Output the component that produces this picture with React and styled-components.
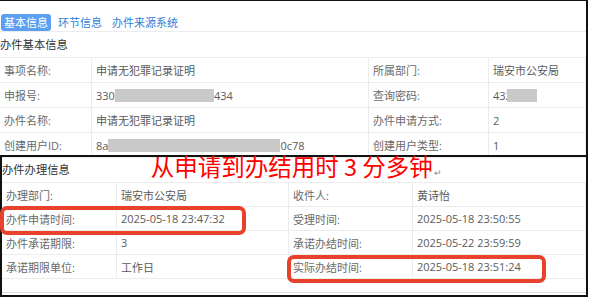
import styled, { createGlobalStyle } from "styled-components"

const GlobalStyle = createGlobalStyle`
  html, body {
    margin: 0;
    padding: 0;
    background: #fff;
  }
  body {
    font-family: "Open Sans", "Noto Sans CJK SC", sans-serif;
    font-size: 11px;
    color: #555;
  }
`

const basicRows = [
    ["事项名称:", "申请无犯罪记录证明", "所属部门:", "瑞安市公安局"],
    ["申报号:", "masked-sn", "查询密码:", "masked-pwd"],
    ["办件名称:", "申请无犯罪记录证明", "办件申请方式:", "2"],
    ["创建用户ID:", "masked-id", "创建用户类型:", "1"],
]

const handleRows = [
    ["办理部门:", "瑞安市公安局", "收件人:", "黄诗怡"],
    ["办件申请时间:", "2025-05-18 23:47:32", "受理时间:", "2025-05-18 23:50:55"],
    ["办件承诺期限:", "3", "承诺办结时间:", "2025-05-22 23:59:59"],
    ["承诺期限单位:", "工作日", "实际办结时间:", "2025-05-18 23:51:24"],
]

//Styled components
const Page = styled.div`
    width: 589px;
    height: 299px;
    display: flex;
    flex-direction: column;
`

const Shot = styled.section`
    box-sizing: border-box;
    width: 588px;
    height: ${props => props.h}px;
    display: flex;
    flex-direction: column;
    position: relative;
    border-top: ${props => props.top}px solid #111;
    border-right: 2px solid #111;
    border-left: ${props => props.boxed ? "2px solid #111" : "none"};
    border-bottom: ${props => props.boxed ? "2px solid #111" : "none"};
`

const TabBar = styled.div`
    display: flex;
    gap: 4px;
    padding: 13px 0 0 1px;
    border-bottom: 1px solid #ececec;
`

const Tab = styled.div`
    height: 17px;
    line-height: 17px;
    padding: 0 3px;
    font-size: 11px;
    border-radius: 3px;
    color: ${props => props.active ? "#fff" : "#2f7fd9"};
    background: ${props => props.active ? "#5b9ff2" : "transparent"};
`

const HeadRow = styled.div`
    height: 25px;
    display: flex;
    align-items: center;
`

const SectionTitle = styled.div`
    font-size: 11.3px;
    color: #333;
    line-height: 25px;
    white-space: nowrap;
`

const Note = styled.div`
    margin-left: 81px;
    font-size: 23.5px;
    line-height: 25px;
    color: #ff0000;
    white-space: nowrap;
    font-family: "Noto Sans CJK SC", "Open Sans", sans-serif;
`

const Pilcrow = styled.span`
    font-size: 9px;
    color: #888;
    margin-left: 1px;
`

const Table = styled.div`
    position: relative;
    display: flex;
    flex-direction: column;
    border-top: 1px solid #ececec;
`

const Row = styled.div`
    display: flex;
    height: ${props => props.$h}px;
`

const Cell = styled.div`
    box-sizing: border-box;
    flex: ${props => props.$w ? `0 0 ${props.$w}px` : "1 1 0"};
    min-width: 0;
    display: flex;
    align-items: center;
    padding-left: 4px;
    border-right: 1px solid #ececec;
    border-bottom: 1px solid #ececec;
    color: ${props => props.$label ? "#6a6a6a" : "#5a5a5a"};
    white-space: nowrap;
    overflow: hidden;
`

const Masked = styled.span`
    display: inline-block;
    flex: none;
    width: ${props => props.w}px;
    height: 13px;
    margin-left: ${props => props.shift || 0}px;
    background: #c9c9c9;
`

const Spacer = styled.div`
    flex: 1;
    border-bottom: 1px solid #dcdcdc;
    margin-bottom: 2px;
`

const Mark = styled.div`
    position: absolute;
    box-sizing: border-box;
    left: ${props => props.x}px;
    top: ${props => props.y}px;
    width: ${props => props.w}px;
    height: ${props => props.h}px;
    border: 4px solid #e8412c;
    border-radius: 7px;
    pointer-events: none;
`

const renderValue = (value) => {
    if (value === "masked-sn") {
        return <>330<Masked w={99} />434</>
    }
    if (value === "masked-pwd") {
        return <>432<Masked w={30} shift={-5} /></>
    }
    if (value === "masked-id") {
        return <>8a<Masked w={172} />0c78</>
    }
    return value
}

const InfoTable = ({ rows, widths, rowH, children }) => (
    <Table>
        {rows.map((row) => (
            <Row key={row[0]} $h={rowH}>
                {row.map((text, i) => (
                    <Cell key={i} $w={widths[i]} $label={i % 2 === 0}>
                        {renderValue(text)}
                    </Cell>
                ))}
            </Row>
        ))}
        {children}
    </Table>
)

const App = () => {
    return (
        <Page>
            <GlobalStyle />
            <Shot h={155} top={1}>
                <TabBar>
                    <Tab active>基本信息</Tab>
                    <Tab>环节信息</Tab>
                    <Tab>办件来源系统</Tab>
                </TabBar>
                <HeadRow>
                    <SectionTitle>办件基本信息</SectionTitle>
                </HeadRow>
                <InfoTable rows={basicRows} widths={[92, 277, 120]} rowH={25} />
            </Shot>
            <Shot h={142} top={2} boxed>
                <HeadRow>
                    <SectionTitle>办件办理信息</SectionTitle>
                    <Note>
                        从申请到办结用时 3 分多钟<Pilcrow>↵</Pilcrow>
                    </Note>
                </HeadRow>
                <InfoTable rows={handleRows} widths={[115, 172, 124]} rowH={24}>
                    <Mark x={-2} y={23} w={246} h={29} />
                    <Mark x={285} y={72} w={259} h={28} />
                </InfoTable>
                <Spacer />
            </Shot>
        </Page>
    )
}

export default App
